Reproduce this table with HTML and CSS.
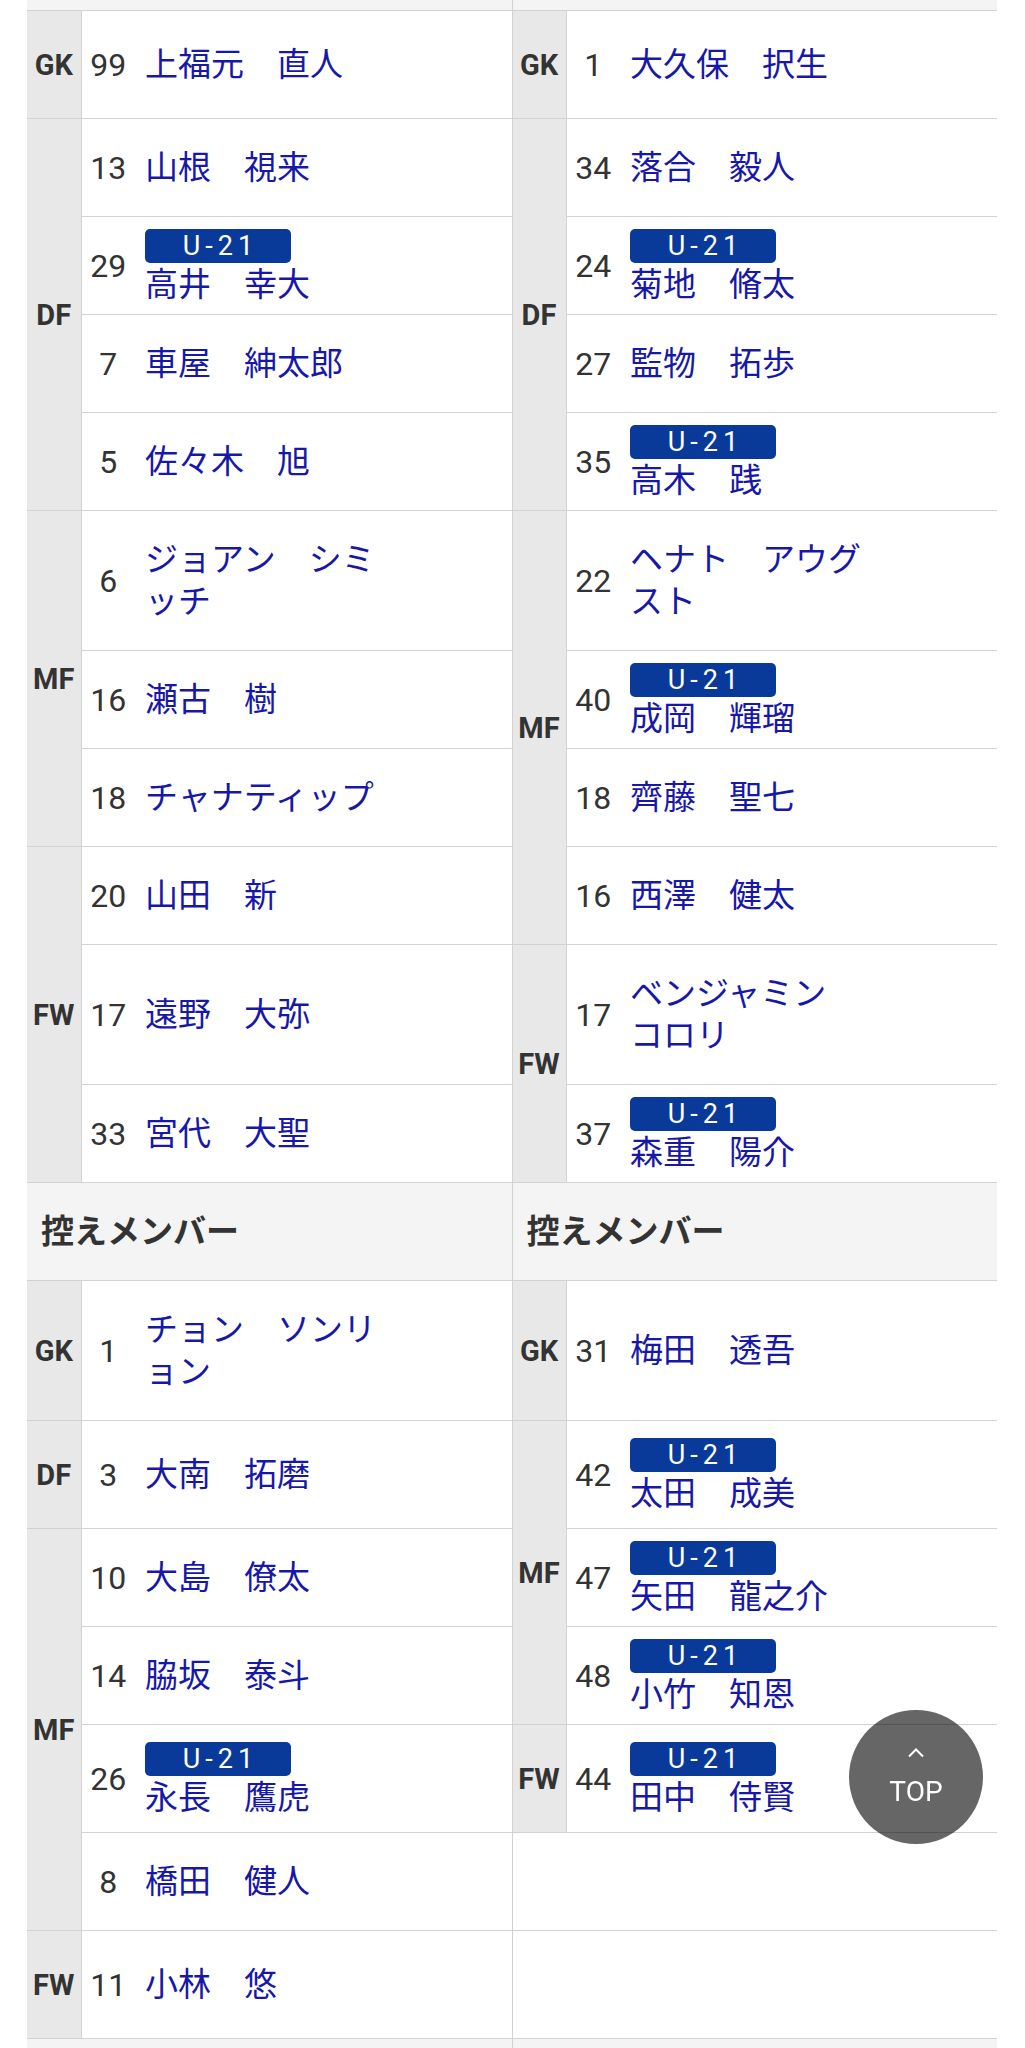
FILE: index.html
```html
<!DOCTYPE html>
<html lang="ja">
<head>
  <meta charset="UTF-8">
  <meta name="viewport" content="width=device-width, initial-scale=1.0">
  <title>メンバー</title>
  <link rel="stylesheet" href="styles.css">
</head>
<body>
  <table class="member">
    <colgroup>
      <col class="c-pos"><col class="c-no"><col>
      <col class="c-pos"><col class="c-no"><col>
    </colgroup>
    <tr class="head cut"><th colspan="3" class="half"></th><th colspan="3"></th></tr>

    <tr>
      <td class="pos">GK</td><td class="no">99</td><td class="name half"><span class="nm">上福元　直人</span></td>
      <td class="pos">GK</td><td class="no">1</td><td class="name"><span class="nm">大久保　択生</span></td>
    </tr>
    <tr>
      <td class="pos" rowspan="4">DF</td><td class="no">13</td><td class="name half"><span class="nm">山根　視来</span></td>
      <td class="pos" rowspan="4">DF</td><td class="no">34</td><td class="name"><span class="nm">落合　毅人</span></td>
    </tr>
    <tr>
      <td class="no">29</td><td class="name half u21"><span class="badge">U-21</span><span class="nm">高井　幸大</span></td>
      <td class="no">24</td><td class="name u21"><span class="badge">U-21</span><span class="nm">菊地　脩太</span></td>
    </tr>
    <tr>
      <td class="no">7</td><td class="name half"><span class="nm">車屋　紳太郎</span></td>
      <td class="no">27</td><td class="name"><span class="nm">監物　拓歩</span></td>
    </tr>
    <tr>
      <td class="no">5</td><td class="name half"><span class="nm">佐々木　旭</span></td>
      <td class="no">35</td><td class="name u21"><span class="badge">U-21</span><span class="nm">高木　践</span></td>
    </tr>
    <tr>
      <td class="pos" rowspan="3">MF</td><td class="no">6</td><td class="name half"><span class="nm">ジョアン　シミッチ</span></td>
      <td class="pos" rowspan="4">MF</td><td class="no">22</td><td class="name"><span class="nm">ヘナト　アウグスト</span></td>
    </tr>
    <tr>
      <td class="no">16</td><td class="name half"><span class="nm">瀬古　樹</span></td>
      <td class="no">40</td><td class="name u21"><span class="badge">U-21</span><span class="nm">成岡　輝瑠</span></td>
    </tr>
    <tr>
      <td class="no">18</td><td class="name half"><span class="nm">チャナティップ</span></td>
      <td class="no">18</td><td class="name"><span class="nm">齊藤　聖七</span></td>
    </tr>
    <tr>
      <td class="pos" rowspan="3">FW</td><td class="no">20</td><td class="name half"><span class="nm">山田　新</span></td>
      <td class="no">16</td><td class="name"><span class="nm">西澤　健太</span></td>
    </tr>
    <tr>
      <td class="no">17</td><td class="name half"><span class="nm">遠野　大弥</span></td>
      <td class="pos" rowspan="2">FW</td><td class="no">17</td><td class="name"><span class="nm">ベンジャミン　コロリ</span></td>
    </tr>
    <tr>
      <td class="no">33</td><td class="name half"><span class="nm">宮代　大聖</span></td>
      <td class="no">37</td><td class="name u21"><span class="badge">U-21</span><span class="nm">森重　陽介</span></td>
    </tr>

    <tr class="head"><th colspan="3" class="half">控えメンバー</th><th colspan="3">控えメンバー</th></tr>

    <tr>
      <td class="pos">GK</td><td class="no">1</td><td class="name half"><span class="nm">チョン　ソンリョン</span></td>
      <td class="pos">GK</td><td class="no">31</td><td class="name"><span class="nm">梅田　透吾</span></td>
    </tr>
    <tr>
      <td class="pos">DF</td><td class="no">3</td><td class="name half"><span class="nm">大南　拓磨</span></td>
      <td class="pos" rowspan="3">MF</td><td class="no">42</td><td class="name u21"><span class="badge">U-21</span><span class="nm">太田　成美</span></td>
    </tr>
    <tr>
      <td class="pos" rowspan="4">MF</td><td class="no">10</td><td class="name half"><span class="nm">大島　僚太</span></td>
      <td class="no">47</td><td class="name u21"><span class="badge">U-21</span><span class="nm">矢田　龍之介</span></td>
    </tr>
    <tr>
      <td class="no">14</td><td class="name half"><span class="nm">脇坂　泰斗</span></td>
      <td class="no">48</td><td class="name u21"><span class="badge">U-21</span><span class="nm">小竹　知恩</span></td>
    </tr>
    <tr>
      <td class="no">26</td><td class="name half u21"><span class="badge">U-21</span><span class="nm">永長　鷹虎</span></td>
      <td class="pos">FW</td><td class="no">44</td><td class="name u21"><span class="badge">U-21</span><span class="nm">田中　侍賢</span></td>
    </tr>
    <tr>
      <td class="no">8</td><td class="name half"><span class="nm">橋田　健人</span></td>
      <td class="empty" colspan="3"></td>
    </tr>
    <tr>
      <td class="pos">FW</td><td class="no">11</td><td class="name half"><span class="nm">小林　悠</span></td>
      <td class="empty" colspan="3"></td>
    </tr>

    <tr class="head"><th colspan="3" class="half"></th><th colspan="3"></th></tr>
  </table>

  <a class="to-top" href="#">
    <svg class="caret" width="18" height="11" viewBox="0 0 18 11"><polyline points="2,9.5 9,2.5 16,9.5" fill="none" stroke="#fff" stroke-width="2"/></svg>
    <span>TOP</span>
  </a>
</body>
</html>
```

FILE: styles.css
```css
body {
  margin: 0;
  font-family: Roboto, "Noto Sans CJK JP", sans-serif;
  color: #333;
  background: #fff;
}
.member {
  margin-left: 27px;
  width: 970px;
  border-collapse: collapse;
  table-layout: fixed;
}
.c-pos, .c-no {
  width: 54px;
}
.member td, .member th {
  border-bottom: 1px solid #d2d2d2;
}
.half {
  border-right: 1px solid #d2d2d2;
}
.pos {
  background: #e8e8e8;
  border-right: 1px solid #d2d2d2;
  text-align: center;
  font-weight: 700;
  font-size: 29px;
  line-height: 40px;
  padding: 34px 0 33px;
  vertical-align: middle;
}
.no {
  text-align: center;
  font-size: 32px;
  line-height: 40px;
  padding: 0;
  vertical-align: middle;
}
.name {
  padding: 28px 10px 27px;
  font-size: 33px;
  line-height: 42px;
  color: #1818a8;
  vertical-align: middle;
}
.name.u21 {
  padding-top: 12px;
  padding-bottom: 8px;
}
.nm {
  display: block;
  max-width: 7.5em;
  line-break: loose;
}
.badge {
  display: block;
  width: 146px;
  height: 34px;
  margin-bottom: 1px;
  border-radius: 5px;
  background: #0a3a99;
  color: #fff;
  font-size: 27px;
  line-height: 34px;
  letter-spacing: 5px;
  padding-left: 5px;
  box-sizing: border-box;
  text-align: center;
}
.head th {
  background: #f4f4f4;
  text-align: left;
  padding: 29px 14px 28px;
  font-size: 33px;
  line-height: 40px;
  font-weight: 700;
}
.head.cut th {
  height: 10px;
  padding: 0;
}
.empty {
  padding: 0;
}
.to-top {
  position: fixed;
  right: 42px;
  bottom: 204px;
  width: 134px;
  height: 134px;
  border-radius: 50%;
  background: rgba(0, 0, 0, 0.6);
  color: #fff;
  display: flex;
  flex-direction: column;
  align-items: center;
  justify-content: center;
  text-decoration: none;
  font-size: 28px;
  line-height: 32px;
}
.caret {
  display: block;
  margin-bottom: 18px;
}
```
